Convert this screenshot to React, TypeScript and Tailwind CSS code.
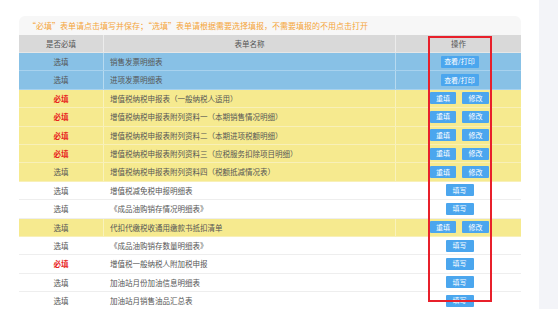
import React from 'react';

type Row = { req: boolean; name: string; tone: 'blue' | 'yellow' | 'white'; action: 'view' | 'edit' | 'fill' };

const rows: Row[] = [
  { req: false, name: '销售发票明细表', tone: 'blue', action: 'view' },
  { req: false, name: '进项发票明细表', tone: 'blue', action: 'view' },
  { req: true, name: '增值税纳税申报表（一般纳税人适用）', tone: 'yellow', action: 'edit' },
  { req: true, name: '增值税纳税申报表附列资料一（本期销售情况明细）', tone: 'yellow', action: 'edit' },
  { req: true, name: '增值税纳税申报表附列资料二（本期进项税额明细）', tone: 'yellow', action: 'edit' },
  { req: true, name: '增值税纳税申报表附列资料三（应税服务扣除项目明细）', tone: 'yellow', action: 'edit' },
  { req: false, name: '增值税纳税申报表附列资料四（税额抵减情况表）', tone: 'yellow', action: 'edit' },
  { req: false, name: '增值税减免税申报明细表', tone: 'white', action: 'fill' },
  { req: false, name: '《成品油购销存情况明细表》', tone: 'white', action: 'fill' },
  { req: false, name: '代扣代缴税收通用缴款书抵扣清单', tone: 'yellow', action: 'edit' },
  { req: false, name: '《成品油购销存数量明细表》', tone: 'white', action: 'fill' },
  { req: true, name: '增值税一般纳税人附加税申报', tone: 'white', action: 'fill' },
  { req: false, name: '加油站月份加油信息明细表', tone: 'white', action: 'fill' },
  { req: false, name: '加油站月销售油品汇总表', tone: 'white', action: 'fill' },
];

const toneCls = {
  blue: 'bg-[#88c1e6] border-[#a8d2ee]',
  yellow: 'bg-[#f6ea8f] border-[#f8f0b8]',
  white: 'bg-white border-[#eeeeee]',
};

const Btn = ({ label, w }: { label: string; w: string }) => (
  <span className={`${w} h-[12px] flex items-center justify-center bg-[#4ba6ee] text-white text-[7px] leading-none rounded-[1px]`}>
    {label}
  </span>
);

export default function App() {
  return (
    <div className="w-[558px] h-[309px] overflow-hidden bg-white flex" style={{ fontFamily: '"Noto Sans CJK SC", "Noto Sans", sans-serif' }}>
      <div className="pl-[19px] pt-[16px] w-[539px]">
        <div className="relative w-[502px]">
          <div className="h-[19px] bg-[#f7f7f7] rounded-t-[6px] flex items-center pl-[9px] text-[8px] text-[#f5a53a]">
            “必填”表单请点击填写并保存；“选填”表单请根据需要选择填报，不需要填报的不用点击打开
          </div>
          <div className="grid grid-cols-[85px_292px_125px] h-[18px] bg-[#d9d9d9] text-[7.5px] text-[#555] border-b border-[#e6e6e6]">
            <div className="flex items-center justify-center border-r border-[#ececec]">是否必填</div>
            <div className="flex items-center justify-center border-r border-[#ececec]">表单名称</div>
            <div className="flex items-center justify-center">操作</div>
          </div>
          {rows.map((r, i) => (
            <div key={i} className={`grid grid-cols-[85px_292px_125px] h-[18.4px] border-b text-[7.5px] ${toneCls[r.tone]}`}>
              <div className={`flex items-center justify-center border-r border-white/40 ${r.req ? 'text-[#e8261f] font-bold' : 'text-[#555]'}`}>
                {r.req ? '必填' : '选填'}
              </div>
              <div className="flex items-center pl-[6px] text-[#555] border-r border-white/40 whitespace-nowrap">{r.name}</div>
              <div className="flex items-center justify-center gap-[6px] pl-[2px]">
                {r.action === 'view' && <Btn label="查看/打印" w="w-[38px]" />}
                {r.action === 'edit' && (
                  <>
                    <Btn label="重填" w="w-[26px]" />
                    <Btn label="修改" w="w-[27px]" />
                  </>
                )}
                {r.action === 'fill' && <Btn label="填写" w="w-[28px]" />}
              </div>
            </div>
          ))}
          <div className="absolute left-[409px] top-[20px] w-[64px] h-[266px] border-2 border-[#e8202b] pointer-events-none" />
        </div>
      </div>
      <div className="flex-1 bg-[#f3f4f8]" />
    </div>
  );
}
